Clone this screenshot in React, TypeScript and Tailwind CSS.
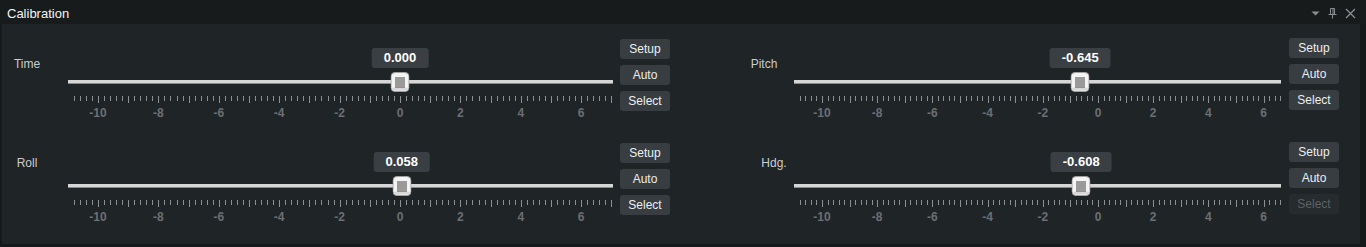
import React from "react";

type Cfg = { width: number; zero: number; scale: number; tickMax: number };

const LEFT: Cfg = { width: 545, zero: 332, scale: 30.2, tickMax: 7.0 };
const RIGHT: Cfg = { width: 487, zero: 304, scale: 27.6, tickMax: 6.6 };

const FONT = { fontFamily: '"Liberation Sans", Arial, sans-serif' };

function Ticks({ cfg }: { cfg: Cfg }) {
  const ticks: React.ReactNode[] = [];
  for (let i = -54; i <= Math.round(cfg.tickMax * 5); i++) {
    const v = i / 5;
    const x = Math.round(cfg.zero + cfg.scale * v) + 0.5;
    const major = i % 5 === 0;
    ticks.push(
      <line key={i} x1={x} x2={x} y1={0} y2={major ? 7 : 5} stroke="#8d9194" strokeWidth={1} />
    );
  }
  return (
    <svg width={cfg.width} height={7} className="block">
      {ticks}
    </svg>
  );
}

function Thumb() {
  return (
    <svg width="19" height="20" viewBox="0 0 19 20" className="block">
      <rect x="0.5" y="0.5" width="18" height="19" rx="4" fill="#f4f4f4" stroke="#a0a0a0" />
      <rect x="1.5" y="15.5" width="16" height="3" rx="1.5" fill="#d8d8d8" />
      {[5, 7, 9, 11, 13].map((x) => (
        <line key={x} x1={x + 0.5} x2={x + 0.5} y1={5} y2={16} stroke="#404040" strokeWidth={1} />
      ))}
    </svg>
  );
}

function Slider({ cfg, value }: { cfg: Cfg; value: number }) {
  const pos = cfg.zero + cfg.scale * value;
  const labels = [-10, -8, -6, -4, -2, 0, 2, 4, 6];
  return (
    <div className="flex flex-col pt-[10px]" style={{ width: cfg.width }}>
      <div className="relative h-[20px]">
        <div
          className="absolute top-0 h-[20px] -translate-x-1/2 rounded-[3px] bg-[#3a3f43] px-[12px] text-[13px] font-bold leading-[20px] text-white"
          style={{ left: pos }}
        >
          {value.toFixed(3)}
        </div>
      </div>
      <div className="relative h-[28px]">
        <div className="absolute left-0 right-0 top-[12px] h-[4px] border-b border-[#8a8a8a] bg-[#d6d6d6]" />
        <div className="absolute top-[4px] -translate-x-1/2" style={{ left: pos }}>
          <Thumb />
        </div>
      </div>
      <Ticks cfg={cfg} />
      <div className="relative h-[20px]">
        {labels.map((l) => (
          <span
            key={l}
            className="absolute top-0 -translate-x-1/2 text-[12px] font-bold leading-[20px] text-[#6b6f72]"
            style={{ left: cfg.zero + cfg.scale * l }}
          >
            {l}
          </span>
        ))}
      </div>
    </div>
  );
}

function Btn({ label, disabled }: { label: string; disabled?: boolean }) {
  return (
    <div
      className={
        "flex h-[20px] w-[50px] items-center justify-center rounded-[3px] text-[12px] " +
        (disabled ? "bg-[#262b2e] text-[#5d6265]" : "bg-[#383d41] text-[#eceef0]")
      }
    >
      {label}
    </div>
  );
}

function Cell({
  label,
  value,
  cfg,
  side,
  labelCls,
  disabledSelect,
}: {
  label: string;
  value: number;
  cfg: Cfg;
  side: "left" | "right";
  labelCls: string;
  disabledSelect?: boolean;
}) {
  return (
    <div className="flex">
      <div className={"h-[20px] w-[50px] text-center text-[12px] leading-[20px] text-[#c9cdd1] " + labelCls}>
        {label}
      </div>
      <div className={side === "left" ? "ml-[16px]" : "ml-[5px]"}>
        <Slider cfg={cfg} value={value} />
      </div>
      <div className={"flex flex-col gap-[6px] " + (side === "left" ? "ml-[7px] pt-[1px]" : "ml-[8px]")}>
        <Btn label="Setup" />
        <Btn label="Auto" />
        <Btn label="Select" disabled={disabledSelect} />
      </div>
    </div>
  );
}

export default function App() {
  return (
    <div className="flex h-[247px] w-[1366px] flex-col bg-[#15191a]" style={FONT}>
      <div className="flex h-[24px] items-center justify-between bg-[#171b1c] pl-[7px] pr-[10px] pt-[3px]">
        <span className="text-[13px] text-[#f2f4f5]">Calibration</span>
        <div className="flex items-center gap-[8px]">
          <svg width="9" height="9" viewBox="0 0 9 9">
            <path d="M0.5 2.5 L8.5 2.5 L4.5 6.5 Z" fill="#8a8e91" />
          </svg>
          <svg width="9" height="11" viewBox="0 0 9 11">
            <path d="M2.5 0.5 H6.5 V6.5 H2.5 Z" fill="none" stroke="#8a8e91" />
            <path d="M5 1 V6" stroke="#8a8e91" />
            <path d="M0.5 6.5 H8.5" stroke="#8a8e91" />
            <path d="M4.5 7 V10.5" stroke="#8a8e91" />
          </svg>
          <svg width="11" height="11" viewBox="0 0 11 11">
            <path d="M1 1 L10 10 M10 1 L1 10" stroke="#8a8e91" strokeWidth="1.3" />
          </svg>
        </div>
      </div>
      <div className="ml-[2px] mr-[6px] flex h-[220px] flex-col gap-[19px] bg-[#1f2427] pt-[14px]">
        <div className="flex gap-[69px]">
          <Cell label="Time" value={0} cfg={LEFT} side="left" labelCls="mt-[16px]" />
          <Cell label="Pitch" value={-0.645} cfg={RIGHT} side="right" labelCls="mt-[16px]" />
        </div>
        <div className="flex gap-[69px]">
          <Cell label="Roll" value={0.058} cfg={LEFT} side="left" labelCls="mt-[11px]" />
          <Cell
            label="Hdg."
            value={-0.608}
            cfg={RIGHT}
            side="right"
            labelCls="mt-[11px] pl-[20px]"
            disabledSelect
          />
        </div>
      </div>
    </div>
  );
}
